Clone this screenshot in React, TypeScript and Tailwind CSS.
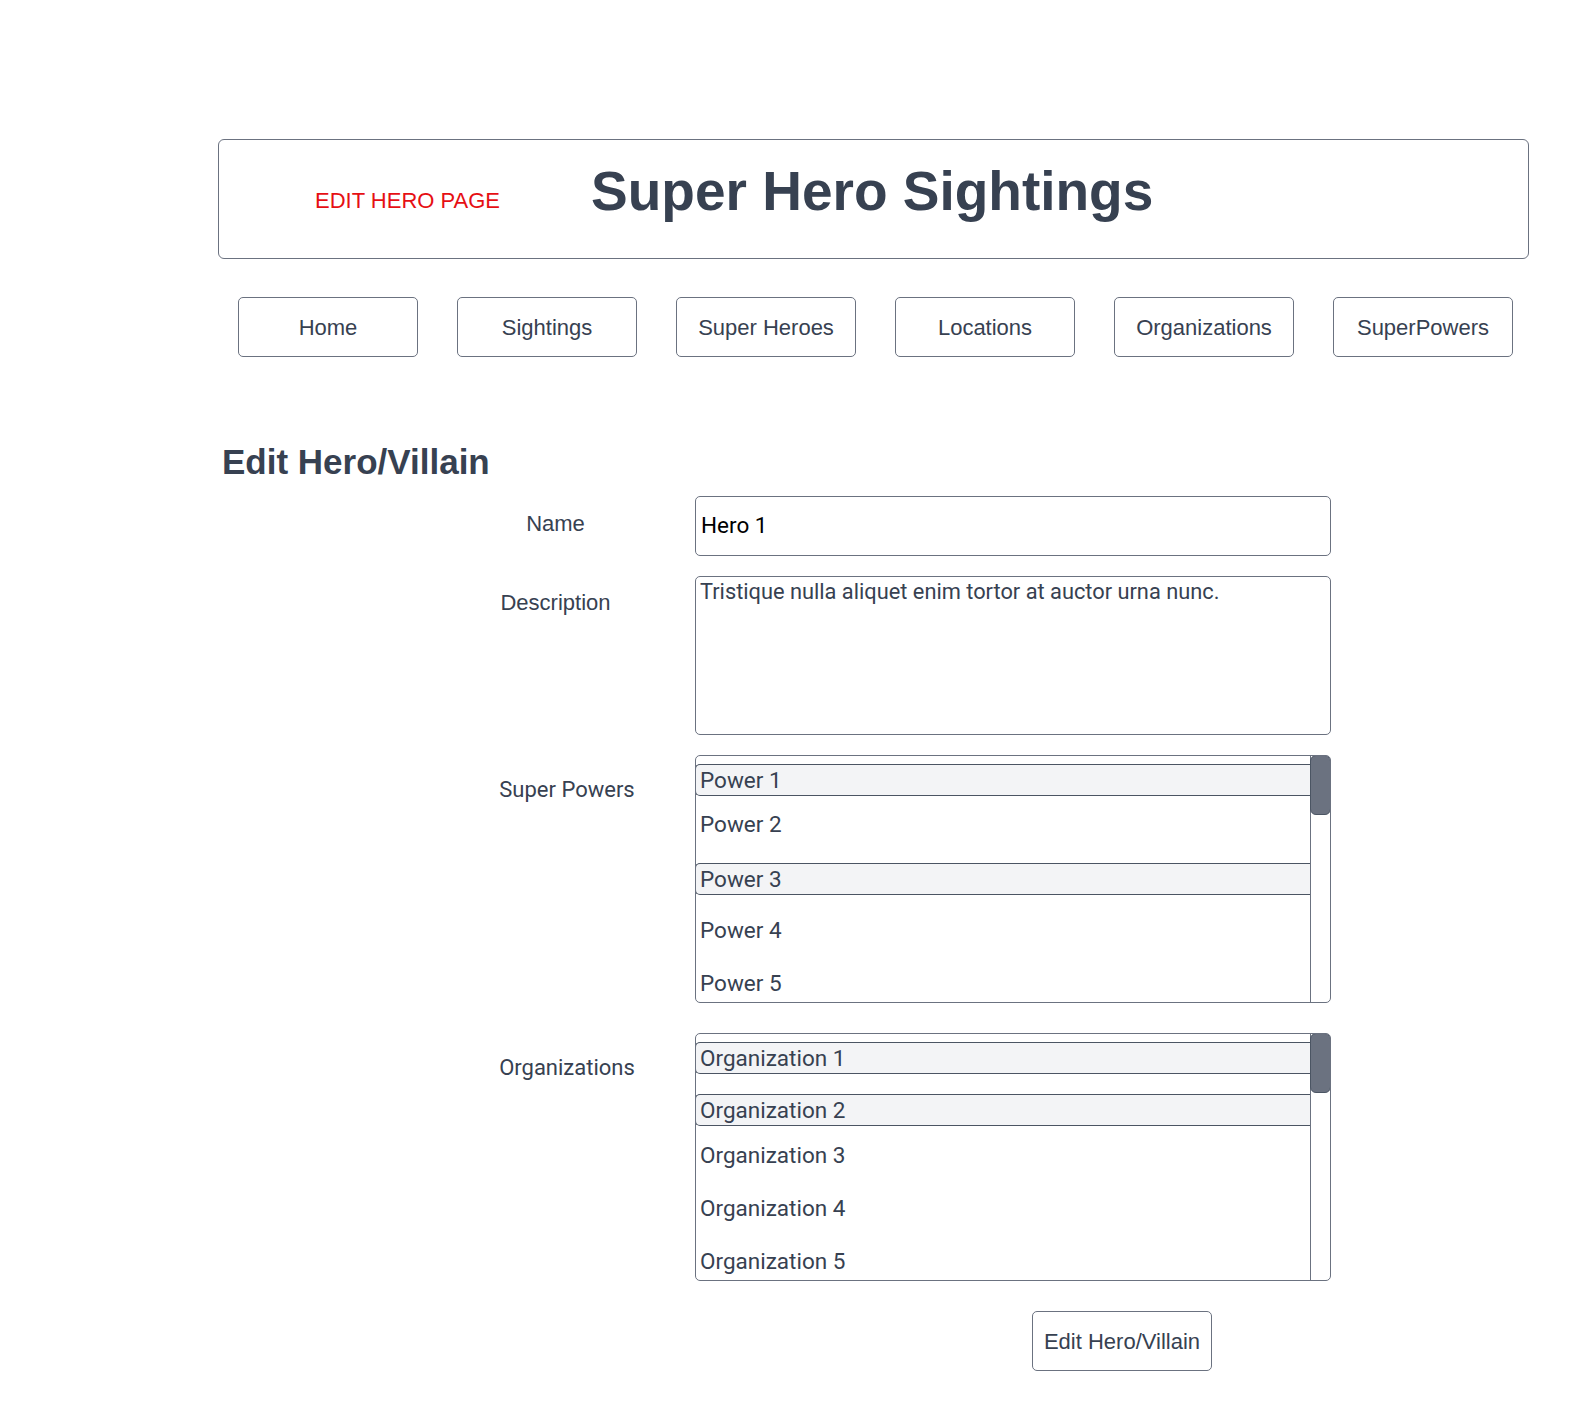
import React from "react";

const navItems = ["Home", "Sightings", "Super Heroes", "Locations", "Organizations", "SuperPowers"];

type Item = { label: string; selected?: boolean; cls: string };

const powers: Item[] = [
    { label: "Power 1", selected: true, cls: "mt-[8px] h-[32px]" },
    { label: "Power 2", cls: "h-[56px]" },
    { label: "Power 3", selected: true, cls: "mt-[11px] h-[32px]" },
    { label: "Power 4", cls: "h-[70px]" },
    { label: "Power 5", cls: "h-[36px]" },
];

const orgs: Item[] = [
    { label: "Organization 1", selected: true, cls: "mt-[8px] h-[32px]" },
    { label: "Organization 2", selected: true, cls: "mt-[20px] h-[32px]" },
    { label: "Organization 3", cls: "h-[58px]" },
    { label: "Organization 4", cls: "h-[48px]" },
    { label: "Organization 5", cls: "h-[58px]" },
];

const ListBox: React.FC<{ items: Item[] }> = ({ items }) => (
    <div className="relative flex h-[248px] w-[636px] overflow-hidden rounded-[5px] border border-[#6b7280] bg-white">
        <div className="flex-1 flex flex-col">
            {items.map((it) => (
                <div
                    key={it.label}
                    className={
                        it.selected
                            ? `${it.cls} shrink-0 flex items-center pl-[4px] rounded-l-[5px] border-y border-l border-[#4b5563] bg-[#f3f4f6] -ml-px`
                            : `${it.cls} shrink-0 flex items-center pl-[4px]`
                    }
                >
                    <span className="text-[22.5px] text-[#374151] leading-none">{it.label}</span>
                </div>
            ))}
        </div>
        <div className="relative w-[20px] shrink-0 border-l border-[#6b7280]">
            <div className="absolute -top-px -right-px -left-px h-[60px] rounded-[6px] border border-[#4b5563] bg-[#6b7280]" />
        </div>
    </div>
);

const Label: React.FC<{ text: string; wide?: boolean; pt: string }> = ({ text, wide, pt }) => (
    <div className={`w-[174px] shrink-0 text-center ${wide ? "" : "pr-[23px]"} ${pt}`}>
        <span className="text-[22px] leading-[24px] text-[#374151]">{text}</span>
    </div>
);

export default function App() {
    return (
        <div
            className="min-h-[1420px] w-[1580px] bg-white pl-[218px] pt-[139px]"
            style={{ fontFamily: '"Liberation Sans", Arial, sans-serif' }}
        >
            {/* header */}
            <div className="flex h-[120px] w-[1311px] items-center rounded-[6px] border border-[#6b7280]">
                <div className="ml-[96px] pt-[2px] text-[22px] text-[#e60f14]">EDIT HERO PAGE</div>
                <div className="ml-[91px] pb-[16px] text-[55px] font-bold text-[#374151]">Super Hero Sightings</div>
            </div>

            {/* nav */}
            <div className="mt-[38px] ml-[20px] flex gap-[39px]">
                {navItems.map((n) => (
                    <div
                        key={n}
                        className="flex h-[60px] w-[180px] items-center justify-center rounded-[5px] border border-[#6b7280] text-[22px] text-[#374151]"
                    >
                        {n}
                    </div>
                ))}
            </div>

            <h1 className="ml-[4px] mt-[85px] text-[35px] font-bold leading-[40px] text-[#374151]">Edit Hero/Villain</h1>

            <div className="ml-[262px] mt-[14px] flex flex-col">
                <div className="flex">
                    <Label text="Name" pt="pt-[16px]" />
                    <div className="ml-[41px] flex h-[60px] w-[636px] items-center rounded-[5px] border border-[#6b7280] pl-[5px]">
                        <span className="text-[22.5px] text-black" style={{ fontFamily: "Roboto, sans-serif" }}>Hero 1</span>
                    </div>
                </div>

                <div className="mt-[20px] flex">
                    <Label text="Description" pt="pt-[15px]" />
                    <div className="ml-[41px] h-[159px] w-[636px] rounded-[5px] border border-[#6b7280] pl-[4px] pt-[2px]">
                        <span className="text-[21.8px] leading-[26px] text-[#374151]" style={{ fontFamily: "Roboto, sans-serif" }}>
                            Tristique nulla aliquet enim tortor at auctor urna nunc.
                        </span>
                    </div>
                </div>

                <div className="mt-[20px] flex" style={{ fontFamily: "Roboto, sans-serif" }}>
                    <Label text="Super Powers" wide pt="pt-[23px]" />
                    <div className="ml-[41px]">
                        <ListBox items={powers} />
                    </div>
                </div>

                <div className="mt-[30px] flex" style={{ fontFamily: "Roboto, sans-serif" }}>
                    <Label text="Organizations" wide pt="pt-[23px]" />
                    <div className="ml-[41px]">
                        <ListBox items={orgs} />
                    </div>
                </div>
            </div>

            <div className="ml-[814px] mt-[30px] flex h-[60px] w-[180px] items-center justify-center rounded-[5px] border border-[#6b7280] text-[22px] text-[#374151]">
                Edit Hero/Villain
            </div>
        </div>
    );
}
